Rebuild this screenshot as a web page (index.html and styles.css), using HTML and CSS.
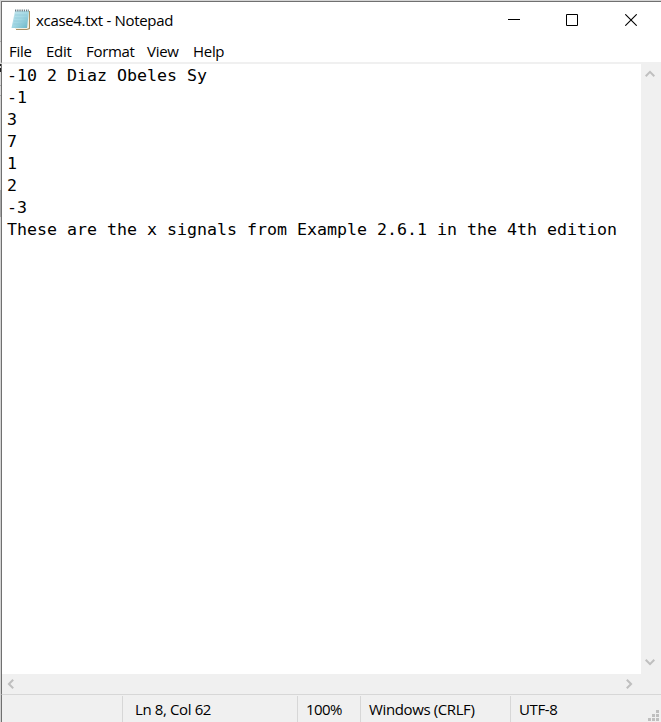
FILE: index.html
```html
<!DOCTYPE html>
<html lang="en">
<head>
<meta charset="utf-8">
<title>xcase4.txt - Notepad</title>
<link rel="stylesheet" href="styles.css">
</head>
<body>
<div class="backdrop"></div>
<div class="window">
  <header class="titlebar">
    <svg class="app-icon" width="21" height="22" viewBox="0 0 21 22">
      <defs><linearGradient id="pad" x1="0" y1="0" x2="1" y2="1"><stop offset="0" stop-color="#c4e6ee"/><stop offset=".5" stop-color="#a3d7e3"/><stop offset="1" stop-color="#66b5c8"/></linearGradient></defs>
      <path d="M17 2h2v18l-3 1H5v-1h11z" fill="#a99166"/>
      <path d="M16 2h2v17l-2 1H4v-1z" fill="#f4efe2"/>
      <path d="M4 2h14l-2 17H.5z" fill="url(#pad)"/>
      <path d="M4 6h12M3.500 9h12M3 12h12M2.500 15h12" stroke="#8ac8d6" stroke-width=".6"/>
      <path d="M4 1.500h14" stroke="#6d8088" stroke-width="2" stroke-dasharray="1.300 .9"/>
    </svg>
    <h1 class="title">xcase4.txt - Notepad</h1>
    <div class="controls">
      <svg width="12" height="12" viewBox="0 0 12 12" shape-rendering="crispEdges"><path d="M0 5h12v1H0z"/></svg>
      <svg width="12" height="12" viewBox="0 0 12 12"><path d="M.5.5h11v11H.5z" fill="none" stroke="#000"/></svg>
      <svg class="close" width="12" height="12" viewBox="0 0 12 12"><path d="M.3.3l11.400 11.400M11.700.3L.3 11.700" fill="none" stroke="#000" stroke-width="1.100"/></svg>
    </div>
  </header>
  <nav class="menu">
    <span class="file">File</span><span class="edit">Edit</span><span class="format">Format</span><span class="view">View</span><span class="help">Help</span>
  </nav>
  <main class="editor">
    <pre class="text">-10 2 Diaz Obeles Sy
-1
3
7
1
2
-3
These are the x signals from Example 2.6.1 in the 4th edition</pre>
    <div class="vscroll">
      <svg width="10" height="8" viewBox="0 0 10 8"><path d="M.7 6.200L5 1.900l4.300 4.300"/></svg>
      <svg width="10" height="8" viewBox="0 0 10 8"><path d="M.7 1.800L5 6.100l4.300-4.300"/></svg>
    </div>
  </main>
  <div class="hscroll">
    <svg width="8" height="10" viewBox="0 0 8 10"><path d="M6.200.7L1.900 5l4.300 4.300"/></svg>
    <svg width="8" height="10" viewBox="0 0 8 10"><path d="M1.800.7L6.100 5 1.800 9.300"/></svg>
  </div>
  <footer class="status">
    <span class="cell"></span>
    <span class="cell position">Ln 8, Col 62</span>
    <span class="cell zoom">100%</span>
    <span class="cell ending">Windows (CRLF)</span>
    <span class="cell encoding">UTF-8</span>
    <svg class="grip" width="11" height="11" viewBox="0 0 11 11" shape-rendering="crispEdges"><path d="M8 0h3v3H8zM4 4h3v3H4zM8 4h3v3H8zM0 8h3v3H0zM4 8h3v3H4zM8 8h3v3H8z" fill="#bfbfbf"/></svg>
  </footer>
</div>
</body>
</html>
```
FILE: styles.css
```css
* { box-sizing: border-box; }
body {
  margin: 0;
  display: flex;
  width: 661px;
  height: 722px;
  overflow: hidden;
  color: #000;
  font: 15px/20px "Open Sans", "Noto Sans", sans-serif;
}
.backdrop {
  width: 1px;
  background: linear-gradient(#d2d2d2 41px, #aaa 41px 42px, #d8d8d8 42px 64px, #222 64px 66px, #d8d8d8 66px 68px, #222 68px 72px, #d8d8d8 72px 85px, #aaa 85px 86px, #d8d8d8 86px 95px, #aaa 95px 96px, #d2d2d2 96px 190px, #a6a6a6 190px 217px, #d2d2d2 217px);
}
.window {
  width: 660px;
  display: flex;
  flex-direction: column;
  background:
    linear-gradient(#d5d5d5, #d5d5d5) 0 0 / 100% 1px no-repeat,
    #fff;
  padding-top: 1px;
}
.window > * { border-left: 1px solid #707070; }
.titlebar {
  height: 39px;
  border-top: 1px solid #707070;
  display: flex;
  align-items: flex-start;
}
.app-icon { margin: 7px 0 0 9px; }
.title {
  margin: 8px 0 0 4px;
  width: 200px;
  font: inherit;
  white-space: pre;
  letter-spacing: -0.32px;
}
.controls {
  margin: 12px 24px 0 auto;
  display: flex;
  gap: 46px;
}
.close { margin-left: 1px; }
.menu {
  height: 24px;
  display: flex;
  padding: 1px 0 0 7px;
  border-bottom: 2px solid #f0f0f0;
  letter-spacing: -0.3px;
}
.menu span { white-space: nowrap; }
.file { width: 37px; }
.edit { width: 40px; }
.format { width: 61px; }
.view { width: 46px; }
.editor { height: 610px; display: flex; }
.text {
  flex: 1;
  margin: 0;
  padding: 1px 0 0 5px;
  font: 16.61px/22px "DejaVu Sans Mono", monospace;
}
.vscroll {
  width: 20px;
  background: #f0f0f0;
  display: flex;
  flex-direction: column;
  justify-content: space-between;
  align-items: center;
  padding: 6px 2px 8px 0;
}
.vscroll path, .hscroll path { fill: none; stroke: #bfbfbf; stroke-width: 2; }
.hscroll {
  height: 20px;
  background: #f0f0f0;
  display: flex;
  align-items: center;
  justify-content: space-between;
  padding: 0 28px 1px 5px;
}
.status {
  flex: 1;
  border-top: 1px solid #d7d7d7;
  background: #f0f0f0;
  display: grid;
  grid-template-columns: 120px 175px 63px 150px 1fr;
  padding-top: 1px;
  position: relative;
  letter-spacing: -0.38px;
}
.cell { padding: 3px 0 0 8px; white-space: nowrap; }
.cell + .cell { border-left: 1px solid #d7d7d7; }
.cell.position { padding-left: 12px; }
.zoom { letter-spacing: -0.6px; }
.grip { position: absolute; right: 2px; bottom: 1px; }
```
